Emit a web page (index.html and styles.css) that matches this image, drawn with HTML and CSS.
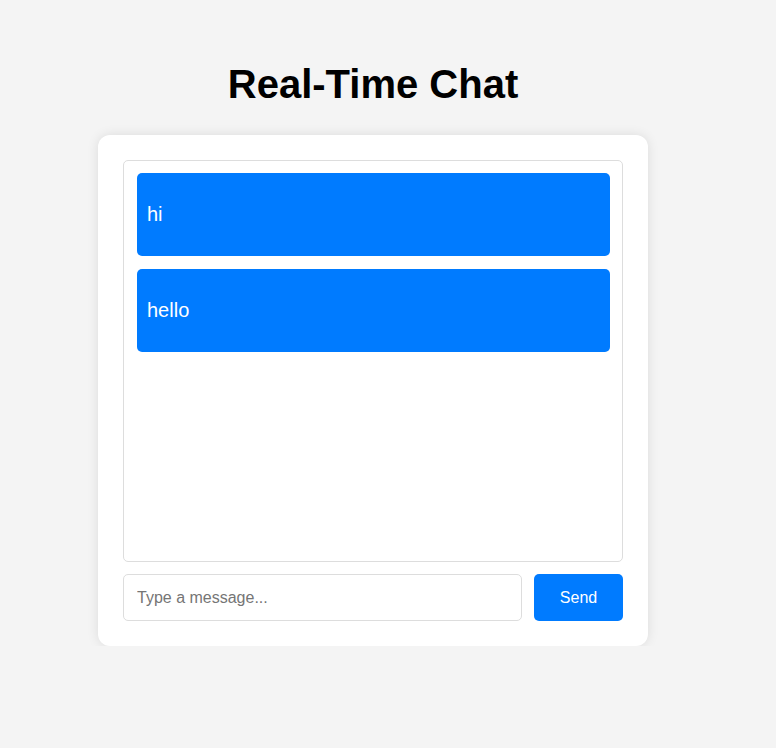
FILE: index.html
```html
<!DOCTYPE html>
<html lang="en">
<head>
<meta charset="UTF-8">
<title>Real-Time Chat</title>
<link rel="stylesheet" href="styles.css">
</head>
<body>
<div class="page">
  <h1 class="title">Real-Time Chat</h1>
  <div class="card">
    <div class="messages">
      <div class="message">hi</div>
      <div class="message">hello</div>
    </div>
    <form class="composer">
      <input class="composer-input" type="text" placeholder="Type a message...">
      <button class="composer-send" type="button">Send</button>
    </form>
  </div>
</div>
</body>
</html>
```
FILE: styles.css
```css
html, body {
  margin: 0;
  padding: 0;
  background: #f4f4f4;
  font-family: "Liberation Sans", Arial, sans-serif;
}
.page {
  width: 746px;
  display: flex;
  flex-direction: column;
  align-items: center;
  padding-top: 61px;
}
.title {
  margin: 0 0 28px;
  font-size: 40px;
  line-height: 46px;
  font-weight: bold;
  color: #000;
}
.card {
  width: 500px;
  padding: 25px;
  background: #fff;
  border-radius: 12px;
  box-shadow: 0 0 12px rgba(0, 0, 0, 0.1);
}
.messages {
  border: 1px solid #ddd;
  border-radius: 5px;
  padding: 12px 12px 12px 13px;
  box-sizing: border-box;
  height: 402px;
  overflow-y: auto;
}
.message {
  background: #007bff;
  color: #fff;
  border-radius: 5px;
  padding: 30px 10px;
  font-size: 20px;
  line-height: 23px;
  margin-bottom: 13px;
}
.composer {
  display: flex;
  gap: 12px;
  margin: 12px 0 0;
}
.composer-input {
  flex: 1;
  height: 47px;
  box-sizing: border-box;
  border: 1px solid #ddd;
  border-radius: 5px;
  padding: 0 13px;
  font-size: 16px;
  font-family: "Liberation Sans", Arial, sans-serif;
  color: #333;
  outline: none;
}
.composer-input::placeholder {
  color: #757575;
}
.composer-send {
  width: 89px;
  height: 47px;
  border: none;
  border-radius: 5px;
  background: #007bff;
  color: #fff;
  font-size: 16px;
  font-family: "Liberation Sans", Arial, sans-serif;
  cursor: pointer;
}
```
